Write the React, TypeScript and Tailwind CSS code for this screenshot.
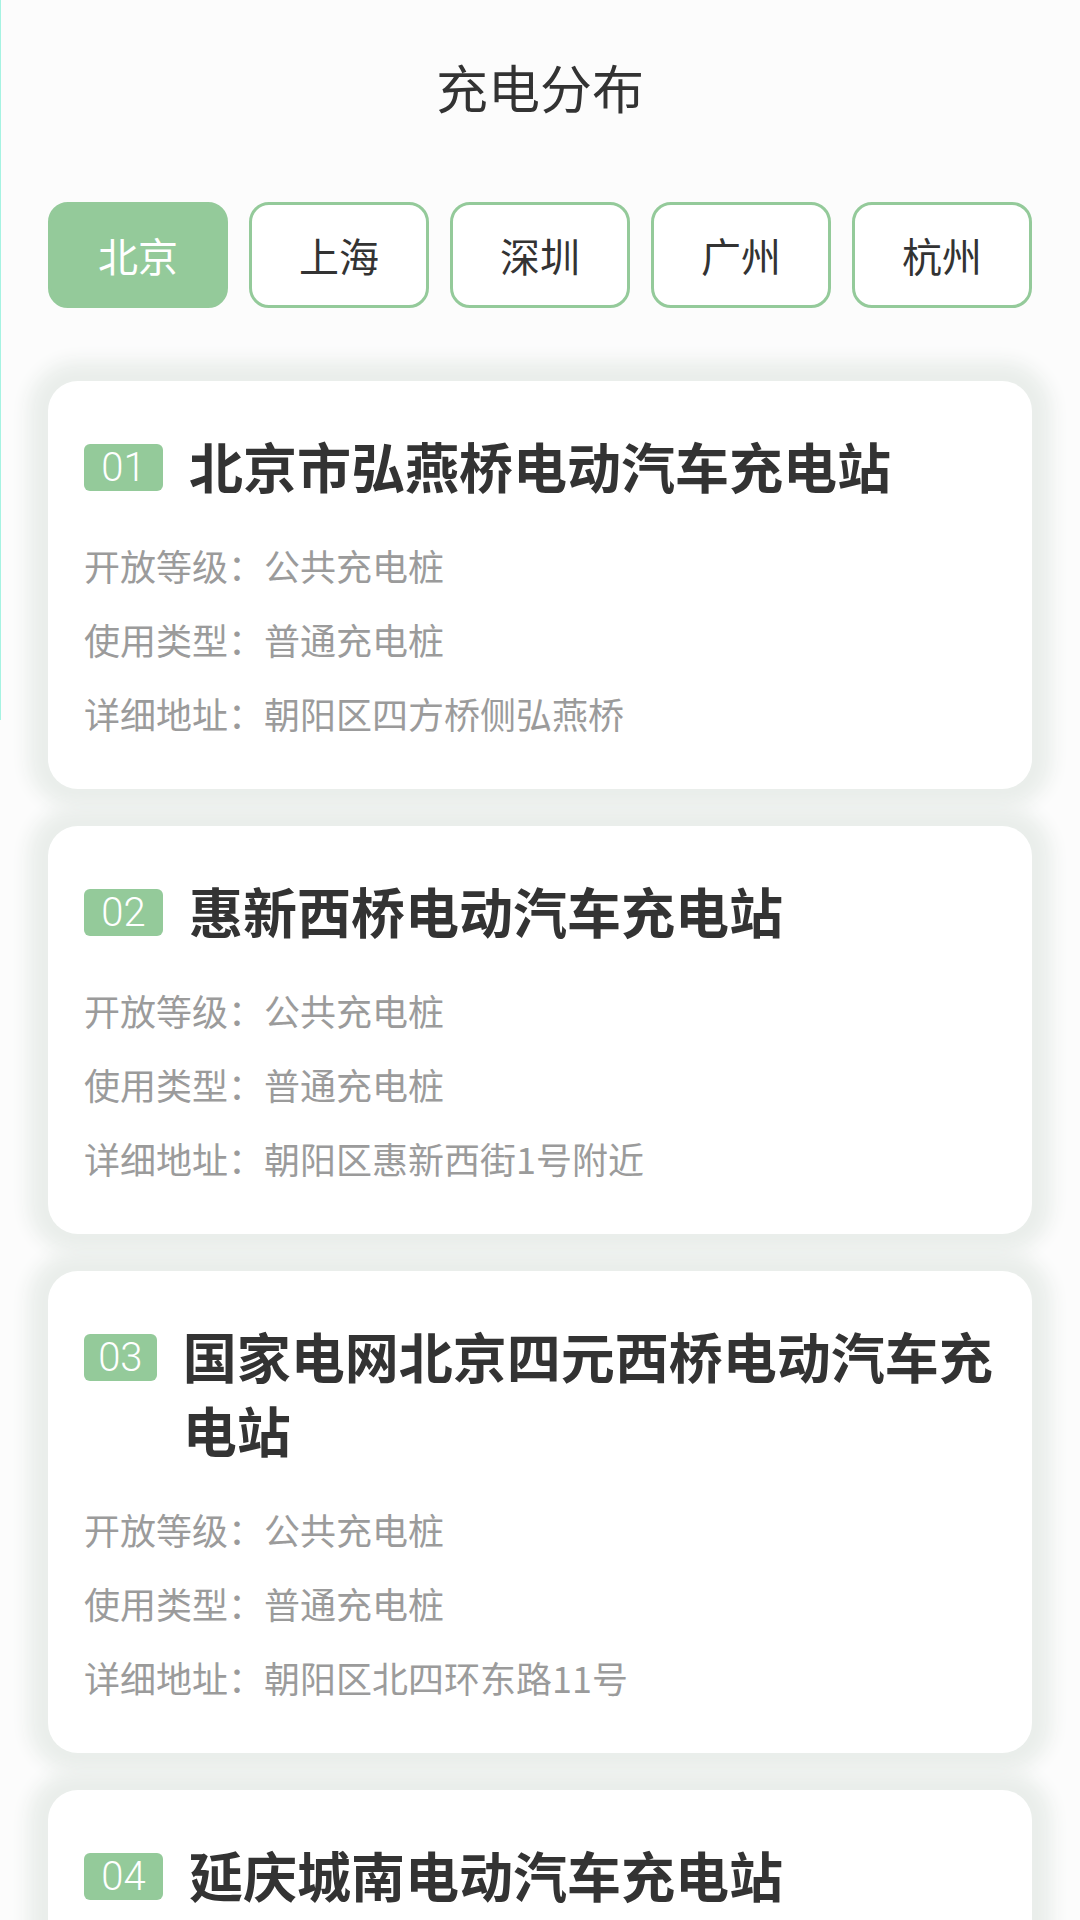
import React from 'react';

interface Station {
  no: string;
  name: string;
  level: string;
  kind: string;
  address: string;
}

const cities = ['北京', '上海', '深圳', '广州', '杭州'];

const stations: Station[] = [
  { no: '01', name: '北京市弘燕桥电动汽车充电站', level: '公共充电桩', kind: '普通充电桩', address: '朝阳区四方桥侧弘燕桥' },
  { no: '02', name: '惠新西桥电动汽车充电站', level: '公共充电桩', kind: '普通充电桩', address: '朝阳区惠新西街1号附近' },
  { no: '03', name: '国家电网北京四元西桥电动汽车充电站', level: '公共充电桩', kind: '普通充电桩', address: '朝阳区北四环东路11号' },
  { no: '04', name: '延庆城南电动汽车充电站', level: '公共充电桩', kind: '普通充电桩', address: '延庆县城南' },
];

const StationCard: React.FC<{ s: Station }> = ({ s }) => (
  <div className="rounded-[30px] bg-white pl-[36px] pr-[30px] pt-[48px] pb-[39px] shadow-[0_0_18px_20px_rgba(234,238,235,1)]">
    <div className="flex items-start gap-[26px]">
      <span className="mt-[15px] flex h-[47px] w-[79px] items-center justify-center rounded-[6px] bg-[#94ca9a] px-[10px] text-[40px] font-light leading-none text-white font-['Roboto',sans-serif]">
        {s.no}
      </span>
      <h2 className="text-[54px] font-bold leading-[74px] text-[#333333]">{s.name}</h2>
    </div>
    <div className="mt-[25px] text-[36px] leading-[74px] text-[#9b9b9b]">
      <p>开放等级：{s.level}</p>
      <p>使用类型：{s.kind}</p>
      <p>详细地址：{s.address}</p>
    </div>
  </div>
);

export default function App() {
  return (
    <div className="relative h-[1920px] overflow-hidden bg-[#fcfcfc] font-['Noto_Sans_CJK_SC','Noto_Sans',sans-serif]">
      <div className="absolute left-0 top-0 h-[720px] w-px bg-[#a6f3e2]" />
      <header className="flex h-[174px] items-center justify-center">
        <h1 className="text-[52px] text-[#333333]">充电分布</h1>
      </header>
      <nav className="mt-[28px] flex gap-[21px] px-[48px]">
        {cities.map((c, i) => (
          <button
            key={c}
            className={
              i === 0
                ? 'flex h-[106px] flex-1 items-center justify-center rounded-[20px] border-[3px] border-[#94ca9a] bg-[#94ca9a] text-[40px] text-white'
                : 'flex h-[106px] flex-1 items-center justify-center rounded-[20px] border-[3px] border-[#94ca9a] bg-white text-[40px] text-[#333333]'
            }
          >
            {c}
          </button>
        ))}
      </nav>
      <main className="mt-[73px] flex flex-col gap-[37px] px-[48px]">
        {stations.map((s) => (
          <StationCard key={s.no} s={s} />
        ))}
      </main>
    </div>
  );
}
